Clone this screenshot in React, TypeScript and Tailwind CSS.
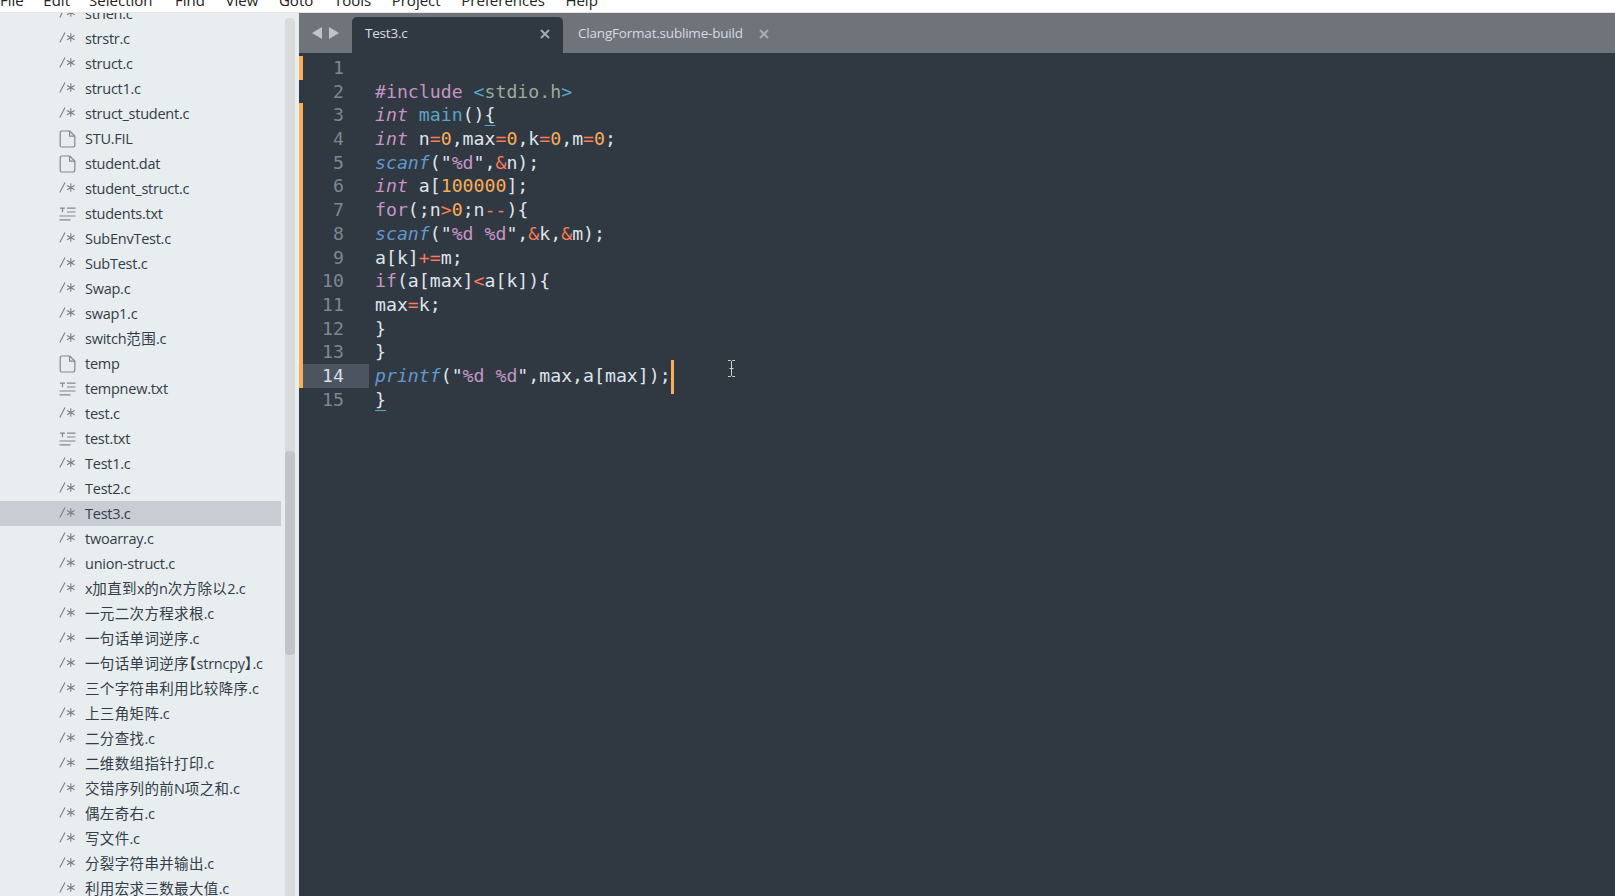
import React from "react";

const B = "text-[#dfe4ec]";
const K = "text-[#c695c6]";
const I = "text-[#c695c6] italic";
const F = "text-[#6399cf] italic";
const M = "text-[#5ca3c9]";
const O = "text-[#f97b58]";
const N = "text-[#f9ae58]";
const G = "text-[#99ad9a]";

type Seg = [string, string];
const t = (s: string, c: string = B): Seg => [s, c];

const code: Seg[][] = [
  [],
  [t("#include", K), t(" "), t("<", M), t("stdio.h", G), t(">", M)],
  [t("int", I), t(" "), t("main", M), t("()"), t("{", "text-[#dfe4ec] underline decoration-[#5ca3c9] underline-offset-4")],
  [t("int", I), t(" n"), t("=", O), t("0", N), t(",max"), t("=", O), t("0", N), t(",k"), t("=", O), t("0", N), t(",m"), t("=", O), t("0", N), t(";")],
  [t("scanf", F), t('("'), t("%d", K), t('",'), t("&", O), t("n);")],
  [t("int", I), t(" a["), t("100000", N), t("];")],
  [t("for", K), t("(;n"), t(">", O), t("0", N), t(";n"), t("--", O), t("){")],
  [t("scanf", F), t('("'), t("%d %d", K), t('",'), t("&", O), t("k,"), t("&", O), t("m);")],
  [t("a[k]"), t("+=", O), t("m;")],
  [t("if", K), t("(a[max]"), t("<", O), t("a[k]){")],
  [t("max"), t("=", O), t("k;")],
  [t("}")],
  [t("}")],
  [t("printf", F), t('("'), t("%d %d", K), t('",max,a[max]);')],
  [t("}", "text-[#dfe4ec] underline decoration-[#5ca3c9] underline-offset-4")],
];

type Kind = "c" | "file" | "txt";
const files: [string, Kind][] = [
  ["strlen.c", "c"], ["strstr.c", "c"], ["struct.c", "c"], ["struct1.c", "c"], ["struct_student.c", "c"],
  ["STU.FIL", "file"], ["student.dat", "file"], ["student_struct.c", "c"], ["students.txt", "txt"],
  ["SubEnvTest.c", "c"], ["SubTest.c", "c"], ["Swap.c", "c"], ["swap1.c", "c"], ["switch范围.c", "c"],
  ["temp", "file"], ["tempnew.txt", "txt"], ["test.c", "c"], ["test.txt", "txt"], ["Test1.c", "c"],
  ["Test2.c", "c"], ["Test3.c", "c"], ["twoarray.c", "c"], ["union-struct.c", "c"],
  ["x加直到x的n次方除以2.c", "c"], ["一元二次方程求根.c", "c"], ["一句话单词逆序.c", "c"],
  ["一句话单词逆序【strncpy】.c", "c"], ["三个字符串利用比较降序.c", "c"], ["上三角矩阵.c", "c"],
  ["二分查找.c", "c"], ["二维数组指针打印.c", "c"], ["交错序列的前N项之和.c", "c"], ["偶左奇右.c", "c"],
  ["写文件.c", "c"], ["分裂字符串并输出.c", "c"], ["利用宏求三数最大值.c", "c"],
];

function FileIcon({ kind }: { kind: Kind }) {
  if (kind === "c")
    return (
      <svg className="-mt-[3px]" width="17" height="11" viewBox="0 0 17 11" fill="none" stroke="#7b8087" strokeWidth="1.1">
        <path d="M6 .5L.8 10.5M11.8 1.2v8.6M8 3.4l7.6 4.3M15.6 3.4L8 7.7" />
      </svg>
    );
  if (kind === "file")
    return (
      <svg width="17" height="18" viewBox="0 0 17 18" fill="none" stroke="#83888e" strokeWidth="1.2">
        <path d="M2.6 1h8.2l5 5v9.6a1.4 1.4 0 0 1-1.4 1.4H2.6a1.4 1.4 0 0 1-1.4-1.4V2.4A1.4 1.4 0 0 1 2.6 1z" />
        <path d="M10.6 1v5.2h5.2" />
      </svg>
    );
  return (
    <svg width="17" height="14" viewBox="0 0 17 14" fill="none" stroke="#83888e" strokeWidth="1.2">
      <path d="M1 1.2h5M3.5 1.2v4M8 1.2h8.5M8 5h8.5M0.5 9h16M0.5 12.8h11" />
    </svg>
  );
}

function Name({ name }: { name: string }) {
  const runs = name.match(/[\x00-\x7f]+|[^\x00-\x7f]+/g) ?? [];
  return (
    <span>
      {runs.map((r, i) => (
        <span key={i} className={/[\x00-\x7f]/.test(r) ? "tracking-[-0.25px]" : "tracking-[0.35px] [font-feature-settings:'halt']"}>
          {r}
        </span>
      ))}
    </span>
  );
}

const menu: [string, string][] = [
  ["File", ""], ["Edit", "-ml-[1px]"], ["Selection", "-ml-[1.5px]"], ["Find", "ml-[2px]"], ["View", ""],
  ["Goto", ""], ["Tools", ""], ["Project", ""], ["Preferences", ""], ["Help", ""],
];

export default function App() {
  return (
    <div className="w-[1615px] h-[896px] overflow-hidden flex flex-col bg-white [font-family:'Open_Sans','Noto_Sans_CJK_SC',sans-serif]">
      <div className="h-[13px] shrink-0 overflow-hidden border-b border-[#e4e4e4]">
        <div className="flex gap-[20.6px] -mt-[12px] text-[15px] leading-[24px] text-[#222]">
          {menu.map(([m, c]) => (
            <span key={m} className={c}>{m}</span>
          ))}
        </div>
      </div>
      <div className="flex-1 flex min-h-0 relative">
        <aside className="w-[299px] shrink-0 bg-[#e8edef] flex overflow-hidden">
          <div className="w-[281px] shrink-0 -mt-3">
            {files.map(([name, kind]) => (
              <div
                key={name}
                className={`h-[25px] flex items-center pl-[59px] text-[14.5px] text-[#333d48] whitespace-nowrap ${name === "Test3.c" ? "bg-[#c8ccd3]" : ""}`}
              >
                <span className="w-[26px] shrink-0 flex items-center">
                  <FileIcon kind={kind} />
                </span>
                <Name name={name} />
              </div>
            ))}
          </div>
          <div className="ml-[4px] mt-[5px] w-[10px] h-[900px] rounded-t bg-[#d9dbdd] pt-[433px]">
            <div className="w-[10px] h-[204px] rounded bg-[#c1c4c8]" />
          </div>
        </aside>
        <main className="flex-1 min-w-0 flex flex-col bg-[#303841]">
          <div className="h-[40px] shrink-0 bg-[#6f747b] flex items-end">
            <div className="w-[53px] h-full flex items-center pl-[13px] gap-[7px]">
              <svg width="10" height="12" viewBox="0 0 10 12"><path d="M10 0v12L0 6z" fill="#c0c4c8" /></svg>
              <svg width="10" height="12" viewBox="0 0 10 12"><path d="M0 0v12l10-6z" fill="#c0c4c8" /></svg>
            </div>
            <div className="w-[211px] h-[36px] bg-[#303841] rounded-t-[5px] flex items-center pl-[13px] pr-[13px] pb-[3px] justify-between text-[13.5px] tracking-[-0.2px] text-[#d8dee9]">
              <span>Test3.c</span>
              <svg width="10" height="10" viewBox="0 0 10 10" stroke="#a5abb2" strokeWidth="2"><path d="M1 1l8 8M9 1l-8 8" /></svg>
            </div>
            <div className="h-[36px] flex items-center pl-[15px] pb-[3px] text-[13.5px] tracking-[-0.2px] text-[#d5dae0]">
              <span>ClangFormat.sublime-build</span>
              <svg className="ml-[16px]" width="10" height="10" viewBox="0 0 10 10" stroke="#a5abb2" strokeWidth="2"><path d="M1 1l8 8M9 1l-8 8" /></svg>
            </div>
          </div>
          <div className="flex-1 pt-[3px] relative text-[18.2px] leading-[23.7px] [font-family:'DejaVu_Sans_Mono',monospace]">
            {code.map((segs, i) => {
              const mod = i !== 1 && i <= 13;
              const active = i === 13;
              return (
                <div key={i} className="h-[23.7px] flex whitespace-pre">
                  <div className={`w-[4px] shrink-0 ${mod ? "bg-[#f9ae58]" : ""}`} />
                  <div className={`w-[66px] shrink-0 text-right pr-[25px] ${active ? "bg-[#4c555f] text-[#d8dee9]" : "text-[#7d8791]"}`}>{i + 1}</div>
                  <div className="pl-[6px] relative">
                    {segs.map(([s, c], j) => (
                      <span key={j} className={c}>{s}</span>
                    ))}
                    {active && <span className="absolute -right-[3px] -top-[4px] w-[3px] h-[34px] bg-[#f9ae58]" />}
                  </div>
                </div>
              );
            })}
            <svg className="absolute left-[428px] top-[307px]" width="9" height="17" viewBox="0 0 9 17" fill="none" stroke="#d0d0d0" strokeWidth="1">
              <path d="M1 .5h2.5l1 1 1-1H8M4.5 1.5v14M1 16.5h2.5l1-1 1 1H8M2.5 8.5h4" />
            </svg>
          </div>
        </main>
      </div>
    </div>
  );
}
